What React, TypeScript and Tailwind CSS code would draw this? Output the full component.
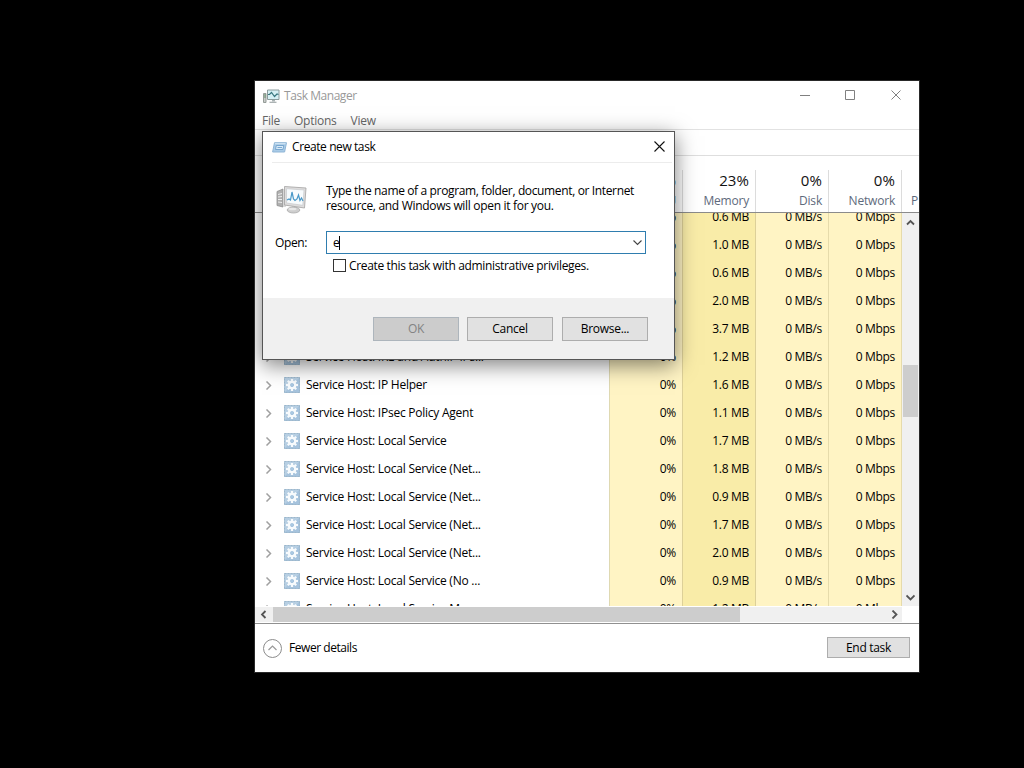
import React from "react";

type Row = { name: string; cpu: string; mem: string };

const rows: Row[] = [
  { name: "", cpu: "0%", mem: "0.6 MB" },
  { name: "", cpu: "0%", mem: "1.0 MB" },
  { name: "", cpu: "0%", mem: "0.6 MB" },
  { name: "", cpu: "0%", mem: "2.0 MB" },
  { name: "", cpu: "0%", mem: "3.7 MB" },
  { name: "Service Host: IKE and AuthIP IPs...", cpu: "0%", mem: "1.2 MB" },
  { name: "Service Host: IP Helper", cpu: "0%", mem: "1.6 MB" },
  { name: "Service Host: IPsec Policy Agent", cpu: "0%", mem: "1.1 MB" },
  { name: "Service Host: Local Service", cpu: "0%", mem: "1.7 MB" },
  { name: "Service Host: Local Service (Net...", cpu: "0%", mem: "1.8 MB" },
  { name: "Service Host: Local Service (Net...", cpu: "0%", mem: "0.9 MB" },
  { name: "Service Host: Local Service (Net...", cpu: "0%", mem: "1.7 MB" },
  { name: "Service Host: Local Service (Net...", cpu: "0%", mem: "2.0 MB" },
  { name: "Service Host: Local Service (No ...", cpu: "0%", mem: "0.9 MB" },
  { name: "Service Host: Local Service Mo...", cpu: "0%", mem: "1.2 MB" },
];

function Chevron({
  dir,
  className,
  weight = 1.1,
}: {
  dir: "up" | "down" | "left" | "right";
  className: string;
  weight?: number;
}) {
  const d = {
    up: "M1 6.5 4.5 3 8 6.5",
    down: "M.5 2.5 4.5 6.5 8.5 2.500",
    left: "M6.5 1 3 4.5 6.5 8",
    right: "M2.5 .5 6.500 4.5 2.500 8.5",
  }[dir];
  return (
    <svg viewBox="0 0 9 9" className={className} fill="none" stroke="currentColor" strokeWidth={weight}>
      <path d={d} />
    </svg>
  );
}

function Gear() {
  const teeth = [0, 45, 90, 135, 180, 225, 270, 315];
  return (
    <svg viewBox="0 0 16 16" className="ml-[11px] h-4 w-4 shrink-0">
      <rect width="16" height="16" fill="#a6c3dd" />
      <path d="M0 0h16L0 16z" fill="#b7cfe3" />
      <path d="M.5.5h15v15H.5z" fill="none" stroke="#9db7cb" strokeDasharray="2 1" />
      {teeth.map((a) => (
        <rect key={a} x="6.9" y="2" width="2.2" height="4" fill="#f8fbfd" transform={`rotate(${a} 8 8)`} />
      ))}
      <circle cx="8" cy="8" r="3.3" fill="none" stroke="#f8fbfd" strokeWidth="2.1" />
      <circle cx="8" cy="8" r="1.4" fill="#a9c8e2" />
    </svg>
  );
}

function MonitorSmall() {
  return (
    <svg viewBox="0 0 17 15" className="h-[15px] w-[17px]">
      <path d="M.5 4.5h2.500v9H.5z" fill="#c9ccca" stroke="#959c98" />
      <path d="M1 6h2M1 8h2" stroke="#64906c" />
      <path d="M4.500 1h11.500v9.500H4.500z" fill="#d5f0f4" stroke="#8a9b9c" />
      <path d="M5 5.500h1.500L8.500 3.500l3 4 2.500-2.500 1.500.5" fill="none" stroke="#39777f" strokeWidth="1.200" />
      <path d="M9 11h3v1.500H9z" fill="#aab3b4" />
      <path d="M6.500 13.300h7" stroke="#a3abac" strokeWidth="1.200" />
    </svg>
  );
}

function RunIcon() {
  return (
    <svg viewBox="0 0 15 11" className="h-[11px] w-[15px]">
      <path d="M2.500.7h12L12.600 10H.6z" fill="#a9cbe7" stroke="#8fb5d6" />
      <path d="M3 1.700h10.500" stroke="#d6e8f5" />
      <path d="M4.300 3.500h7.500l-.9 4H3.500z" fill="#d9ebf8" stroke="#6f9fca" strokeWidth=".9" />
      <path d="M5.500 5.500h4.500" stroke="#79a8d2" />
    </svg>
  );
}

function MonitorLarge() {
  return (
    <svg viewBox="0 0 32 30" className="mt-px ml-px h-[30px] w-8">
      <path d="M1 6.500 7 4v18l-6-1.500z" fill="#b0b0b0" stroke="#909090" strokeWidth=".8" />
      <path d="M7 4l3 .8v17L7 22z" fill="#d7d7d7" />
      <path d="M2 9.500 6 8.500M2 12l4-.5M2 14.500h4M2 17l4 .5" stroke="#eee" />
      <path d="M8.500 1.500 30 3 28.500 23 8.500 20z" fill="#dedddd" stroke="#aaa9a9" strokeWidth=".9" />
      <path d="M10.500 3.700 28 5 26.800 20.300 10.600 18z" fill="#f7fbfd" stroke="#c2c4c8" strokeWidth=".6" />
      <path d="M11 15 13 14l1.500 1L16 7l1.500 7 1.500 1.500 2-1.500 1.500-4 1.500 5.500 1.500-2.500 1.500 3" fill="none" stroke="#4898c8" strokeWidth="1.200" />
      <path d="M16 21.500 21 22.500v2.500h-5z" fill="#b5b5b5" />
      <ellipse cx="17.500" cy="25" rx="6.300" ry="3" fill="#cecece" stroke="#aaa" strokeWidth=".8" />
      <ellipse cx="16.500" cy="24" rx="4" ry="1.300" fill="#e8e8e8" />
    </svg>
  );
}

function HeaderCell({ value, label }: { value: string; label: string }) {
  return (
    <div className="flex w-[73px] shrink-0 flex-col items-end border-r border-[#dcdcdc] pr-[6px]">
      <span className="text-[15px] leading-[20px] tracking-[0.1px] text-[#111]">{value}</span>
      <span className="mt-px text-[12px] leading-[20px] tracking-[-0.2px] text-[#5e6a7c]">{label}</span>
    </div>
  );
}

function DialogButton({ children, disabled = false }: { children: string; disabled?: boolean }) {
  return (
    <button
      disabled={disabled}
      className={
        disabled
          ? "h-6 w-[86px] border border-[#adb5bc] bg-[#cccccc] leading-[22px] text-[#838383]"
          : "h-6 w-[86px] border border-[#adadad] bg-[#e1e1e1] leading-[22px] text-black"
      }
    >
      {children}
    </button>
  );
}

function CreateTaskDialog() {
  return (
    <div className="absolute top-[50px] left-[7px] flex h-[229px] w-[413px] flex-col border border-[#555] bg-white shadow-[0_5px_20px_rgba(0,0,0,0.5)]">
      <div className="mr-[2px] ml-[9px] flex h-[31px] shrink-0 items-center border-b border-[#ececec]">
        <RunIcon />
        <span className="ml-[5px] grow tracking-[-0.41px]">Create new task</span>
        <svg viewBox="0 0 11 11" className="mr-[7px] mb-[2px] h-[11px] w-[11px]" stroke="#111" strokeWidth="1.100">
          <path d="M.5.5l10 10M10.500.5l-10 10" />
        </svg>
      </div>
      <div className="flex h-[68px] shrink-0 pt-[21px] pl-[12px]">
        <MonitorLarge />
        <div className="-mt-px ml-[18px] leading-[15px] whitespace-nowrap">
          <p className="tracking-[-0.36px]">Type the name of a program, folder, document, or Internet</p>
          <p className="tracking-[-0.31px]">resource, and Windows will open it for you.</p>
        </div>
      </div>
      <div className="flex h-[23px] shrink-0 items-center pl-[12px]">
        <span className="w-[51px] tracking-[-0.4px]">Open:</span>
        <div className="flex h-[23px] w-[320px] items-center border border-[#2f7daf] pr-[3px] pl-[6px]">
          <span>e</span>
          <span className="h-[14px] w-px bg-black" />
          <Chevron dir="down" className="ml-auto h-[9px] w-[9px] text-[#444]" />
        </div>
      </div>
      <div className="mt-[3px] flex h-[17px] shrink-0 items-center pl-[70px]">
        <span className="h-[13px] w-[13px] border border-[#333] bg-white" />
        <span className="ml-[3px] tracking-[-0.34px] whitespace-nowrap">Create this task with administrative privileges.</span>
      </div>
      <div className="mt-auto flex h-[61px] shrink-0 justify-end gap-2 bg-[#f0f0f0] pt-[19px] pr-[26px]">
        <DialogButton disabled>OK</DialogButton>
        <DialogButton>Cancel</DialogButton>
        <div className="ml-px">
          <DialogButton>Browse...</DialogButton>
        </div>
      </div>
    </div>
  );
}

export default function App() {
  return (
    <div className="h-[768px] w-[1024px] overflow-hidden bg-black pt-[80px] pl-[254px] font-['Open_Sans','Noto_Sans',sans-serif] text-[12px] tracking-[-0.3px] text-black">
      <div className="relative flex h-[593px] w-[666px] flex-col overflow-hidden border border-[#292929] bg-white">
        <div className="flex h-[29px] shrink-0 items-center pt-px pl-[8px]">
          <MonitorSmall />
          <span className="ml-[4px] grow tracking-[-0.45px] text-[#999]">Task Manager</span>
          <svg viewBox="0 0 104 12" className="mr-[16px] mb-[2px] h-3 w-[104px]" fill="none" stroke="#808080">
            <path d="M1 6.500h10M46.500 1.500h9v9h-9zM92.500 1.500l9 9M101.500 1.500l-9 9" />
          </svg>
        </div>
        <div className="flex h-[20px] shrink-0 items-center gap-[14px] border-b border-[#e2e2e2] pt-[3px] pl-[7px] tracking-[-0.25px] text-[#666]">
          <span>File</span>
          <span>Options</span>
          <span>View</span>
        </div>
        <div className="h-[26px] shrink-0 border-b border-[#dedede]" />
        <div className="flex h-[57px] shrink-0 overflow-hidden border-b border-[#8b8b8b] pt-[14px]">
          <div className="w-[355px] shrink-0" />
          <HeaderCell value="3%" label="CPU" />
          <HeaderCell value="23%" label="Memory" />
          <HeaderCell value="0%" label="Disk" />
          <HeaderCell value="0%" label="Network" />
          <span className="mt-[21px] ml-[9px] w-[7px] shrink-0 leading-[20px] text-[#5e6a7c]">P</span>
        </div>
        <div className="flex h-[393px] shrink-0 overflow-hidden">
          <div className="-mt-[10px] w-[647px] shrink-0">
            {rows.map((r, i) => (
              <div key={i} className="flex h-7 items-stretch">
                <div className="flex w-[354px] shrink-0 items-center pl-[9px]">
                  <Chevron dir="right" weight={1.5} className="h-[9px] w-[9px] text-[#a0a0a0]" />
                  <Gear />
                  <span className="ml-[6px] tracking-[-0.24px] whitespace-nowrap">{r.name}</span>
                </div>
                <div className="flex w-[74px] shrink-0 items-center justify-end border-x border-r-[#ddd098] border-l-[#dfd9b2] bg-[#fff4c4] pr-[6px]">{r.cpu}</div>
                <div className="flex w-[73px] shrink-0 items-center justify-end border-r border-[#ddd098] bg-[#f9eca8] pr-[6px]">{r.mem}</div>
                <div className="flex w-[73px] shrink-0 items-center justify-end border-r border-[#e6dbab] bg-[#fff4c4] pr-[6px]">0 MB/s</div>
                <div className="flex w-[73px] shrink-0 items-center justify-end border-r border-[#e6dbab] bg-[#fff4c4] pr-[6px]">0 Mbps</div>
              </div>
            ))}
          </div>
          <div className="flex w-[17px] shrink-0 flex-col items-center bg-[#f0f0f0] pt-[5px] pr-px pb-[4px]">
            <Chevron dir="up" weight={1.8} className="h-[9px] w-[9px] text-[#555]" />
            <div className="mt-[138px] h-[52px] w-[15px] bg-[#cdcdcd]" />
            <Chevron dir="down" weight={1.8} className="mt-auto h-[9px] w-[9px] text-[#555]" />
          </div>
        </div>
        <div className="flex h-[18px] shrink-0 border-b border-[#909090] pt-[1px] pb-[1px]">
          <div className="flex w-[647px] items-center bg-[#f0f0f0] pl-[4px]">
            <Chevron dir="left" weight={1.8} className="h-[9px] w-[9px] text-[#555]" />
            <div className="ml-[5px] h-full w-[467px] bg-[#cdcdcd]" />
            <Chevron dir="right" weight={1.8} className="mr-[3px] ml-auto h-[9px] w-[9px] text-[#555]" />
          </div>
        </div>
        <div className="flex grow items-center pr-[9px] pl-[8px]">
          <svg viewBox="0 0 19 19" className="h-[19px] w-[19px]" fill="none" stroke="#8c8c8c">
            <circle cx="9.500" cy="9.500" r="9" />
            <path d="M5.500 11 9.500 7l4 4" stroke="#999" strokeWidth="1.200" />
          </svg>
          <span className="ml-[7px] grow tracking-[-0.45px]">Fewer details</span>
          <button className="mb-px h-[21px] w-[83px] border border-[#adadad] bg-[#e1e1e1] leading-[19px] tracking-[-0.3px]">End task</button>
        </div>
        <CreateTaskDialog />
      </div>
    </div>
  );
}
